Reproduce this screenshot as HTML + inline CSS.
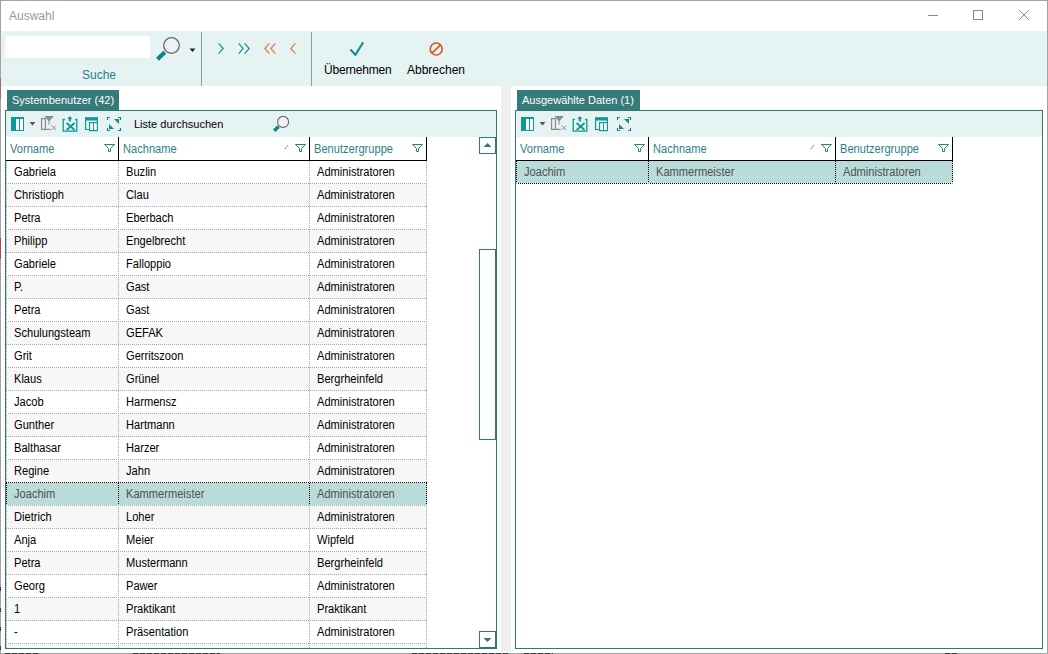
<!DOCTYPE html><html><head><meta charset="utf-8"><style>
html,body{margin:0;padding:0;}
body{width:1048px;height:654px;overflow:hidden;position:relative;background:#fff;font-family:"Liberation Sans",sans-serif;}
.t{position:absolute;white-space:nowrap;line-height:1;}
.ui{font-size:12px;}
.g{font-size:12px;transform-origin:0 0;transform:scaleX(0.925);}
</style></head><body>
<div style="position:absolute;left:0px;top:0px;width:1048px;height:654px;box-sizing:border-box;border:1px solid #a3a3a3;"></div>
<div class="t" style="left:9px;top:10px;font-size:12px;color:#9a9a9a;">Auswahl</div>
<div style="position:absolute;left:928px;top:15px;width:10px;height:1px;background:#888"></div>
<div style="position:absolute;left:973px;top:10px;width:10px;height:10px;box-sizing:border-box;border:1px solid #888"></div>
<svg style="position:absolute;left:1019px;top:10px;" width="10" height="10" viewBox="0 0 10 10"><path d="M0 0 L10 10 M10 0 L0 10" stroke="#888" stroke-width="1"/></svg>
<div style="position:absolute;left:1px;top:31px;width:1046px;height:55px;background:#e6f3f3"></div>
<div style="position:absolute;left:5px;top:36px;width:145px;height:22px;background:#fff"></div>
<svg style="position:absolute;left:154px;top:35px;" width="30" height="28" viewBox="0 0 30 28"><circle cx="17.5" cy="10.5" r="7.8" fill="#eef2f8" stroke="#6a6a6a" stroke-width="1.3"/><path d="M3.5 24.2 L10.8 17.2" stroke="#0e8584" stroke-width="4.2" stroke-linecap="butt"/></svg>
<svg style="position:absolute;left:189px;top:48px;" width="7" height="5" viewBox="0 0 7 5"><path d="M0.5 0.5 L6.5 0.5 L3.5 4 Z" fill="#222"/></svg>
<div class="t" style="left:82px;top:69px;font-size:12px;color:#2a7d8c;">Suche</div>
<div style="position:absolute;left:201px;top:32px;width:1px;height:54px;background:#8f9a9a"></div>
<div style="position:absolute;left:311px;top:32px;width:1px;height:54px;background:#8f9a9a"></div>
<svg style="position:absolute;left:218px;top:43px;" width="6" height="11" viewBox="0 0 6 11"><path d="M0.6 0.4 L5.2 5.5 L0.6 10.6" fill="none" stroke="#1b8c8c" stroke-width="1.2"/></svg>
<svg style="position:absolute;left:238px;top:43px;" width="6" height="11" viewBox="0 0 6 11"><path d="M0.6 0.4 L5.2 5.5 L0.6 10.6" fill="none" stroke="#1b8c8c" stroke-width="1.2"/></svg>
<svg style="position:absolute;left:244px;top:43px;" width="6" height="11" viewBox="0 0 6 11"><path d="M0.6 0.4 L5.2 5.5 L0.6 10.6" fill="none" stroke="#1b8c8c" stroke-width="1.2"/></svg>
<svg style="position:absolute;left:264px;top:43px;" width="6" height="11" viewBox="0 0 6 11"><path d="M5.4 0.4 L0.8 5.5 L5.4 10.6" fill="none" stroke="#e07845" stroke-width="1.2"/></svg>
<svg style="position:absolute;left:270px;top:43px;" width="6" height="11" viewBox="0 0 6 11"><path d="M5.4 0.4 L0.8 5.5 L5.4 10.6" fill="none" stroke="#e07845" stroke-width="1.2"/></svg>
<svg style="position:absolute;left:290px;top:43px;" width="6" height="11" viewBox="0 0 6 11"><path d="M5.4 0.4 L0.8 5.5 L5.4 10.6" fill="none" stroke="#e07845" stroke-width="1.2"/></svg>
<svg style="position:absolute;left:348px;top:41px;" width="17" height="16" viewBox="0 0 17 16"><path d="M2.4 8.6 L7.4 13.8 L15.2 1.4" fill="none" stroke="#1b8c8c" stroke-width="2.1"/></svg>
<svg style="position:absolute;left:428px;top:41px;" width="17" height="16" viewBox="0 0 17 16"><circle cx="8.2" cy="8" r="6" fill="none" stroke="#d9552a" stroke-width="1.7"/><path d="M12.5 3.8 L4 12.2" stroke="#d9552a" stroke-width="1.7"/></svg>
<div class="t" style="left:324px;top:64px;font-size:12px;color:#000;letter-spacing:-0.2px;">Übernehmen</div>
<div class="t" style="left:407px;top:64px;font-size:12px;color:#000;">Abbrechen</div>
<div style="position:absolute;left:501px;top:86px;width:10px;height:566px;background:#efefef"></div>
<div style="position:absolute;left:7px;top:90px;width:112px;height:20px;background:#367b79"></div>
<div class="t" style="left:12px;top:95px;font-size:11px;color:#fff;">Systembenutzer (42)</div>
<div style="position:absolute;left:5px;top:110px;width:492px;height:539px;box-sizing:border-box;border:1px solid #2f7a78;"></div>
<div style="position:absolute;left:6px;top:111px;width:490px;height:26px;background:#e6f3f3"></div>
<svg style="position:absolute;left:11px;top:117px;" width="13" height="14" viewBox="0 0 13 14"><rect x="0" y="0" width="13" height="14" fill="#0e9896"/><rect x="5" y="2" width="3" height="11" fill="#fff"/><rect x="9" y="2" width="3" height="11" fill="#fff"/></svg>
<svg style="position:absolute;left:29px;top:121px;" width="7" height="5" viewBox="0 0 7 5"><path d="M0.5 1 L6.5 1 L3.5 4.5 Z" fill="#555"/></svg>
<svg style="position:absolute;left:40px;top:115px;" width="18" height="17" viewBox="0 0 18 17"><rect x="1.6" y="3.6" width="3.8" height="10.8" fill="#f4f6f6" stroke="#8c8c8c" stroke-width="1.3"/><path d="M5 14.4 H10.5" stroke="#8c8c8c" stroke-width="1.3"/><path d="M4.5 1 H14 L9.5 6 V9.5 L8.5 10 V6 Z" fill="#8c8c8c"/><path d="M11.5 10.5 L16 15 M16 10.5 L11.5 15" stroke="#8c8c8c" stroke-width="1"/></svg>
<svg style="position:absolute;left:62px;top:115px;" width="16" height="18" viewBox="0 0 16 18"><path d="M3 4.5 H1.2 V16.2 H14.8 V4.5 H13" fill="none" stroke="#0e9896" stroke-width="1.3"/><path d="M7.8 1 L10.4 3.9 H8.8 V6.6 H6.8 V3.9 H5.2 Z" fill="#0e9896"/><path d="M4.6 8 L12.6 15 M12.6 8 L4.6 15" stroke="#0e9896" stroke-width="1.8"/></svg>
<svg style="position:absolute;left:84px;top:116px;" width="15" height="16" viewBox="0 0 15 16"><rect x="1" y="1.2" width="13" height="3.3" fill="#0e9896"/><path d="M1.6 1.2 V14 M1 13.5 H5.5 M13.4 1.2 V6.5" fill="none" stroke="#0e9896" stroke-width="1.2"/><rect x="5.6" y="6.6" width="7.8" height="8" fill="#fff" stroke="#0e9896" stroke-width="1.2"/><path d="M9.5 7 V14.6" stroke="#0e9896" stroke-width="1"/></svg>
<svg style="position:absolute;left:106px;top:116px;" width="16" height="16" viewBox="0 0 16 16"><path d="M1.5 4 V1.5 H4 M12 1.5 H14.5 V4 M14.5 12 V14.5 H12 M4 14.5 H1.5 V12" fill="none" stroke="#1a8584" stroke-width="1.2"/><path d="M8 3 H13 V8 Z" fill="#1a8584"/><path d="M3 8 V13 H8 Z" fill="#1a8584"/></svg>
<div style="position:absolute;left:6px;top:160px;width:421px;height:1px;background:#000"></div>
<div style="position:absolute;left:118px;top:137px;width:1px;height:24px;background:#000"></div>
<div class="t g" style="left:10px;top:143px;color:#2d7f88;">Vorname</div><svg style="position:absolute;left:104px;top:144px;" width="12" height="9" viewBox="0 0 12 9"><path d="M0.5 0.5 H10.5 L6.5 4.5 V7.5 H4.5 V4.5 Z" fill="none" stroke="#2f7f7f" stroke-width="1" stroke-linejoin="miter"/></svg>
<div style="position:absolute;left:309px;top:137px;width:1px;height:24px;background:#000"></div>
<div class="t g" style="left:123px;top:143px;color:#2d7f88;">Nachname</div><svg style="position:absolute;left:295px;top:144px;" width="12" height="9" viewBox="0 0 12 9"><path d="M0.5 0.5 H10.5 L6.5 4.5 V7.5 H4.5 V4.5 Z" fill="none" stroke="#2f7f7f" stroke-width="1" stroke-linejoin="miter"/></svg>
<svg style="position:absolute;left:284px;top:144px;" width="5" height="6" viewBox="0 0 5 6"><path d="M0.5 5.5 L4 1" stroke="#888" stroke-width="0.9"/></svg>
<div style="position:absolute;left:426px;top:137px;width:1px;height:24px;background:#000"></div>
<div class="t g" style="left:314px;top:143px;color:#2d7f88;">Benutzergruppe</div><svg style="position:absolute;left:412px;top:144px;" width="12" height="9" viewBox="0 0 12 9"><path d="M0.5 0.5 H10.5 L6.5 4.5 V7.5 H4.5 V4.5 Z" fill="none" stroke="#2f7f7f" stroke-width="1" stroke-linejoin="miter"/></svg>
<div style="position:absolute;left:6px;top:183px;width:421px;height:1px;background:repeating-linear-gradient(to right,#a8a8a8 0 1px,transparent 1px 2px)"></div>
<div class="t g" style="left:14px;top:166px;color:#000;">Gabriela</div><div class="t g" style="left:126px;top:166px;color:#000;">Buzlin</div><div class="t g" style="left:317px;top:166px;color:#000;">Administratoren</div><div style="position:absolute;left:6px;top:184px;width:421px;height:23px;background:#f7f7f7"></div>
<div style="position:absolute;left:6px;top:206px;width:421px;height:1px;background:repeating-linear-gradient(to right,#a8a8a8 0 1px,transparent 1px 2px)"></div>
<div class="t g" style="left:14px;top:189px;color:#000;">Christioph</div><div class="t g" style="left:126px;top:189px;color:#000;">Clau</div><div class="t g" style="left:317px;top:189px;color:#000;">Administratoren</div><div style="position:absolute;left:6px;top:229px;width:421px;height:1px;background:repeating-linear-gradient(to right,#a8a8a8 0 1px,transparent 1px 2px)"></div>
<div class="t g" style="left:14px;top:212px;color:#000;">Petra</div><div class="t g" style="left:126px;top:212px;color:#000;">Eberbach</div><div class="t g" style="left:317px;top:212px;color:#000;">Administratoren</div><div style="position:absolute;left:6px;top:230px;width:421px;height:23px;background:#f7f7f7"></div>
<div style="position:absolute;left:6px;top:252px;width:421px;height:1px;background:repeating-linear-gradient(to right,#a8a8a8 0 1px,transparent 1px 2px)"></div>
<div class="t g" style="left:14px;top:235px;color:#000;">Philipp</div><div class="t g" style="left:126px;top:235px;color:#000;">Engelbrecht</div><div class="t g" style="left:317px;top:235px;color:#000;">Administratoren</div><div style="position:absolute;left:6px;top:275px;width:421px;height:1px;background:repeating-linear-gradient(to right,#a8a8a8 0 1px,transparent 1px 2px)"></div>
<div class="t g" style="left:14px;top:258px;color:#000;">Gabriele</div><div class="t g" style="left:126px;top:258px;color:#000;">Falloppio</div><div class="t g" style="left:317px;top:258px;color:#000;">Administratoren</div><div style="position:absolute;left:6px;top:276px;width:421px;height:23px;background:#f7f7f7"></div>
<div style="position:absolute;left:6px;top:298px;width:421px;height:1px;background:repeating-linear-gradient(to right,#a8a8a8 0 1px,transparent 1px 2px)"></div>
<div class="t g" style="left:14px;top:281px;color:#000;">P.</div><div class="t g" style="left:126px;top:281px;color:#000;">Gast</div><div class="t g" style="left:317px;top:281px;color:#000;">Administratoren</div><div style="position:absolute;left:6px;top:321px;width:421px;height:1px;background:repeating-linear-gradient(to right,#a8a8a8 0 1px,transparent 1px 2px)"></div>
<div class="t g" style="left:14px;top:304px;color:#000;">Petra</div><div class="t g" style="left:126px;top:304px;color:#000;">Gast</div><div class="t g" style="left:317px;top:304px;color:#000;">Administratoren</div><div style="position:absolute;left:6px;top:322px;width:421px;height:23px;background:#f7f7f7"></div>
<div style="position:absolute;left:6px;top:344px;width:421px;height:1px;background:repeating-linear-gradient(to right,#a8a8a8 0 1px,transparent 1px 2px)"></div>
<div class="t g" style="left:14px;top:327px;color:#000;">Schulungsteam</div><div class="t g" style="left:126px;top:327px;color:#000;">GEFAK</div><div class="t g" style="left:317px;top:327px;color:#000;">Administratoren</div><div style="position:absolute;left:6px;top:367px;width:421px;height:1px;background:repeating-linear-gradient(to right,#a8a8a8 0 1px,transparent 1px 2px)"></div>
<div class="t g" style="left:14px;top:350px;color:#000;">Grit</div><div class="t g" style="left:126px;top:350px;color:#000;">Gerritszoon</div><div class="t g" style="left:317px;top:350px;color:#000;">Administratoren</div><div style="position:absolute;left:6px;top:368px;width:421px;height:23px;background:#f7f7f7"></div>
<div style="position:absolute;left:6px;top:390px;width:421px;height:1px;background:repeating-linear-gradient(to right,#a8a8a8 0 1px,transparent 1px 2px)"></div>
<div class="t g" style="left:14px;top:373px;color:#000;">Klaus</div><div class="t g" style="left:126px;top:373px;color:#000;">Grünel</div><div class="t g" style="left:317px;top:373px;color:#000;">Bergrheinfeld</div><div style="position:absolute;left:6px;top:413px;width:421px;height:1px;background:repeating-linear-gradient(to right,#a8a8a8 0 1px,transparent 1px 2px)"></div>
<div class="t g" style="left:14px;top:396px;color:#000;">Jacob</div><div class="t g" style="left:126px;top:396px;color:#000;">Harmensz</div><div class="t g" style="left:317px;top:396px;color:#000;">Administratoren</div><div style="position:absolute;left:6px;top:414px;width:421px;height:23px;background:#f7f7f7"></div>
<div style="position:absolute;left:6px;top:436px;width:421px;height:1px;background:repeating-linear-gradient(to right,#a8a8a8 0 1px,transparent 1px 2px)"></div>
<div class="t g" style="left:14px;top:419px;color:#000;">Gunther</div><div class="t g" style="left:126px;top:419px;color:#000;">Hartmann</div><div class="t g" style="left:317px;top:419px;color:#000;">Administratoren</div><div style="position:absolute;left:6px;top:459px;width:421px;height:1px;background:repeating-linear-gradient(to right,#a8a8a8 0 1px,transparent 1px 2px)"></div>
<div class="t g" style="left:14px;top:442px;color:#000;">Balthasar</div><div class="t g" style="left:126px;top:442px;color:#000;">Harzer</div><div class="t g" style="left:317px;top:442px;color:#000;">Administratoren</div><div style="position:absolute;left:6px;top:460px;width:421px;height:23px;background:#f7f7f7"></div>
<div style="position:absolute;left:6px;top:482px;width:421px;height:1px;background:repeating-linear-gradient(to right,#000 0 1px,transparent 1px 2px)"></div>
<div class="t g" style="left:14px;top:465px;color:#000;">Regine</div><div class="t g" style="left:126px;top:465px;color:#000;">Jahn</div><div class="t g" style="left:317px;top:465px;color:#000;">Administratoren</div><div style="position:absolute;left:6px;top:483px;width:421px;height:22px;background:#b9dcdb"></div>
<div style="position:absolute;left:6px;top:505px;width:421px;height:1px;background:repeating-linear-gradient(to right,#a8a8a8 0 1px,transparent 1px 2px)"></div>
<div class="t g" style="left:14px;top:488px;color:#505050;">Joachim</div><div class="t g" style="left:126px;top:488px;color:#505050;">Kammermeister</div><div class="t g" style="left:317px;top:488px;color:#505050;">Administratoren</div><div style="position:absolute;left:6px;top:506px;width:421px;height:23px;background:#f7f7f7"></div>
<div style="position:absolute;left:6px;top:528px;width:421px;height:1px;background:repeating-linear-gradient(to right,#a8a8a8 0 1px,transparent 1px 2px)"></div>
<div class="t g" style="left:14px;top:511px;color:#000;">Dietrich</div><div class="t g" style="left:126px;top:511px;color:#000;">Loher</div><div class="t g" style="left:317px;top:511px;color:#000;">Administratoren</div><div style="position:absolute;left:6px;top:551px;width:421px;height:1px;background:repeating-linear-gradient(to right,#a8a8a8 0 1px,transparent 1px 2px)"></div>
<div class="t g" style="left:14px;top:534px;color:#000;">Anja</div><div class="t g" style="left:126px;top:534px;color:#000;">Meier</div><div class="t g" style="left:317px;top:534px;color:#000;">Wipfeld</div><div style="position:absolute;left:6px;top:552px;width:421px;height:23px;background:#f7f7f7"></div>
<div style="position:absolute;left:6px;top:574px;width:421px;height:1px;background:repeating-linear-gradient(to right,#a8a8a8 0 1px,transparent 1px 2px)"></div>
<div class="t g" style="left:14px;top:557px;color:#000;">Petra</div><div class="t g" style="left:126px;top:557px;color:#000;">Mustermann</div><div class="t g" style="left:317px;top:557px;color:#000;">Bergrheinfeld</div><div style="position:absolute;left:6px;top:597px;width:421px;height:1px;background:repeating-linear-gradient(to right,#a8a8a8 0 1px,transparent 1px 2px)"></div>
<div class="t g" style="left:14px;top:580px;color:#000;">Georg</div><div class="t g" style="left:126px;top:580px;color:#000;">Pawer</div><div class="t g" style="left:317px;top:580px;color:#000;">Administratoren</div><div style="position:absolute;left:6px;top:598px;width:421px;height:23px;background:#f7f7f7"></div>
<div style="position:absolute;left:6px;top:620px;width:421px;height:1px;background:repeating-linear-gradient(to right,#a8a8a8 0 1px,transparent 1px 2px)"></div>
<div class="t g" style="left:14px;top:603px;color:#000;">1</div><div class="t g" style="left:126px;top:603px;color:#000;">Praktikant</div><div class="t g" style="left:317px;top:603px;color:#000;">Praktikant</div><div style="position:absolute;left:6px;top:643px;width:421px;height:1px;background:repeating-linear-gradient(to right,#a8a8a8 0 1px,transparent 1px 2px)"></div>
<div class="t g" style="left:14px;top:626px;color:#000;">-</div><div class="t g" style="left:126px;top:626px;color:#000;">Präsentation</div><div class="t g" style="left:317px;top:626px;color:#000;">Administratoren</div><div style="position:absolute;left:6px;top:644px;width:421px;height:4px;background:#f7f7f7"></div>
<div style="position:absolute;left:6px;top:161px;width:1px;height:487px;background:repeating-linear-gradient(to bottom,#a8a8a8 0 1px,transparent 1px 2px)"></div>
<div style="position:absolute;left:118px;top:161px;width:1px;height:487px;background:repeating-linear-gradient(to bottom,#a8a8a8 0 1px,transparent 1px 2px)"></div>
<div style="position:absolute;left:309px;top:161px;width:1px;height:487px;background:repeating-linear-gradient(to bottom,#a8a8a8 0 1px,transparent 1px 2px)"></div>
<div style="position:absolute;left:426px;top:161px;width:1px;height:487px;background:repeating-linear-gradient(to bottom,#a8a8a8 0 1px,transparent 1px 2px)"></div>
<div style="position:absolute;left:6px;top:483px;width:1px;height:22px;background:repeating-linear-gradient(to bottom,#000 0 1px,transparent 1px 2px)"></div>
<div style="position:absolute;left:118px;top:483px;width:1px;height:22px;background:repeating-linear-gradient(to bottom,#000 0 1px,transparent 1px 2px)"></div>
<div style="position:absolute;left:309px;top:483px;width:1px;height:22px;background:repeating-linear-gradient(to bottom,#000 0 1px,transparent 1px 2px)"></div>
<div style="position:absolute;left:426px;top:483px;width:1px;height:22px;background:repeating-linear-gradient(to bottom,#000 0 1px,transparent 1px 2px)"></div>
<div style="position:absolute;left:479px;top:137px;width:17px;height:17px;box-sizing:border-box;border:1px solid #2f7a78;background:#fff"></div>
<svg style="position:absolute;left:483px;top:142px;" width="9" height="6" viewBox="0 0 9 6"><path d="M4.5 1 L8.5 5 H0.5 Z" fill="#2f7a78"/></svg>
<div style="position:absolute;left:479px;top:249px;width:17px;height:191px;box-sizing:border-box;border:1px solid #2f7a78;background:#fff"></div>
<div style="position:absolute;left:479px;top:631px;width:17px;height:17px;box-sizing:border-box;border:1px solid #2f7a78;background:#fff"></div>
<svg style="position:absolute;left:483px;top:637px;" width="9" height="6" viewBox="0 0 9 6"><path d="M4.5 5 L8.5 1 H0.5 Z" fill="#2f7a78"/></svg>
<div class="t" style="left:134px;top:119px;font-size:11px;color:#000;">Liste durchsuchen</div>
<svg style="position:absolute;left:270px;top:113px;" width="22" height="22" viewBox="0 0 22 22"><circle cx="13.1" cy="8.9" r="5.5" fill="#eef2f8" stroke="#6a6a6a" stroke-width="1.1"/><path d="M4.2 17.8 L8.6 13.6" stroke="#0e8584" stroke-width="3.4" stroke-linecap="butt"/></svg>
<div style="position:absolute;left:517px;top:90px;width:123px;height:20px;background:#367b79"></div>
<div class="t" style="left:522px;top:95px;font-size:11px;color:#fff;">Ausgewählte Daten (1)</div>
<div style="position:absolute;left:515px;top:110px;width:528px;height:539px;box-sizing:border-box;border:1px solid #2f7a78;"></div>
<div style="position:absolute;left:516px;top:111px;width:526px;height:26px;background:#e6f3f3"></div>
<svg style="position:absolute;left:521px;top:117px;" width="13" height="14" viewBox="0 0 13 14"><rect x="0" y="0" width="13" height="14" fill="#0e9896"/><rect x="5" y="2" width="3" height="11" fill="#fff"/><rect x="9" y="2" width="3" height="11" fill="#fff"/></svg>
<svg style="position:absolute;left:539px;top:121px;" width="7" height="5" viewBox="0 0 7 5"><path d="M0.5 1 L6.5 1 L3.5 4.5 Z" fill="#555"/></svg>
<svg style="position:absolute;left:550px;top:115px;" width="18" height="17" viewBox="0 0 18 17"><rect x="1.6" y="3.6" width="3.8" height="10.8" fill="#f4f6f6" stroke="#8c8c8c" stroke-width="1.3"/><path d="M5 14.4 H10.5" stroke="#8c8c8c" stroke-width="1.3"/><path d="M4.5 1 H14 L9.5 6 V9.5 L8.5 10 V6 Z" fill="#8c8c8c"/><path d="M11.5 10.5 L16 15 M16 10.5 L11.5 15" stroke="#8c8c8c" stroke-width="1"/></svg>
<svg style="position:absolute;left:572px;top:115px;" width="16" height="18" viewBox="0 0 16 18"><path d="M3 4.5 H1.2 V16.2 H14.8 V4.5 H13" fill="none" stroke="#0e9896" stroke-width="1.3"/><path d="M7.8 1 L10.4 3.9 H8.8 V6.6 H6.8 V3.9 H5.2 Z" fill="#0e9896"/><path d="M4.6 8 L12.6 15 M12.6 8 L4.6 15" stroke="#0e9896" stroke-width="1.8"/></svg>
<svg style="position:absolute;left:594px;top:116px;" width="15" height="16" viewBox="0 0 15 16"><rect x="1" y="1.2" width="13" height="3.3" fill="#0e9896"/><path d="M1.6 1.2 V14 M1 13.5 H5.5 M13.4 1.2 V6.5" fill="none" stroke="#0e9896" stroke-width="1.2"/><rect x="5.6" y="6.6" width="7.8" height="8" fill="#fff" stroke="#0e9896" stroke-width="1.2"/><path d="M9.5 7 V14.6" stroke="#0e9896" stroke-width="1"/></svg>
<svg style="position:absolute;left:616px;top:116px;" width="16" height="16" viewBox="0 0 16 16"><path d="M1.5 4 V1.5 H4 M12 1.5 H14.5 V4 M14.5 12 V14.5 H12 M4 14.5 H1.5 V12" fill="none" stroke="#1a8584" stroke-width="1.2"/><path d="M8 3 H13 V8 Z" fill="#1a8584"/><path d="M3 8 V13 H8 Z" fill="#1a8584"/></svg>
<div style="position:absolute;left:516px;top:160px;width:437px;height:1px;background:#000"></div>
<div style="position:absolute;left:648px;top:137px;width:1px;height:24px;background:#000"></div>
<div class="t g" style="left:520px;top:143px;color:#2d7f88;">Vorname</div><svg style="position:absolute;left:634px;top:144px;" width="12" height="9" viewBox="0 0 12 9"><path d="M0.5 0.5 H10.5 L6.5 4.5 V7.5 H4.5 V4.5 Z" fill="none" stroke="#2f7f7f" stroke-width="1" stroke-linejoin="miter"/></svg>
<div style="position:absolute;left:835px;top:137px;width:1px;height:24px;background:#000"></div>
<div class="t g" style="left:653px;top:143px;color:#2d7f88;">Nachname</div><svg style="position:absolute;left:821px;top:144px;" width="12" height="9" viewBox="0 0 12 9"><path d="M0.5 0.5 H10.5 L6.5 4.5 V7.5 H4.5 V4.5 Z" fill="none" stroke="#2f7f7f" stroke-width="1" stroke-linejoin="miter"/></svg>
<svg style="position:absolute;left:810px;top:144px;" width="5" height="6" viewBox="0 0 5 6"><path d="M0.5 5.5 L4 1" stroke="#888" stroke-width="0.9"/></svg>
<div style="position:absolute;left:952px;top:137px;width:1px;height:24px;background:#000"></div>
<div class="t g" style="left:840px;top:143px;color:#2d7f88;">Benutzergruppe</div><svg style="position:absolute;left:938px;top:144px;" width="12" height="9" viewBox="0 0 12 9"><path d="M0.5 0.5 H10.5 L6.5 4.5 V7.5 H4.5 V4.5 Z" fill="none" stroke="#2f7f7f" stroke-width="1" stroke-linejoin="miter"/></svg>
<div style="position:absolute;left:516px;top:161px;width:437px;height:22px;background:#b9dcdb"></div>
<div style="position:absolute;left:516px;top:183px;width:437px;height:1px;background:repeating-linear-gradient(to right,#000 0 1px,transparent 1px 2px)"></div>
<div class="t g" style="left:524px;top:166px;color:#505050;">Joachim</div><div class="t g" style="left:656px;top:166px;color:#505050;">Kammermeister</div><div class="t g" style="left:843px;top:166px;color:#505050;">Administratoren</div><div style="position:absolute;left:516px;top:161px;width:1px;height:23px;background:repeating-linear-gradient(to bottom,#a8a8a8 0 1px,transparent 1px 2px)"></div>
<div style="position:absolute;left:648px;top:161px;width:1px;height:23px;background:repeating-linear-gradient(to bottom,#a8a8a8 0 1px,transparent 1px 2px)"></div>
<div style="position:absolute;left:835px;top:161px;width:1px;height:23px;background:repeating-linear-gradient(to bottom,#a8a8a8 0 1px,transparent 1px 2px)"></div>
<div style="position:absolute;left:952px;top:161px;width:1px;height:23px;background:repeating-linear-gradient(to bottom,#a8a8a8 0 1px,transparent 1px 2px)"></div>
<div style="position:absolute;left:516px;top:161px;width:1px;height:22px;background:repeating-linear-gradient(to bottom,#000 0 1px,transparent 1px 2px)"></div>
<div style="position:absolute;left:648px;top:161px;width:1px;height:22px;background:repeating-linear-gradient(to bottom,#000 0 1px,transparent 1px 2px)"></div>
<div style="position:absolute;left:835px;top:161px;width:1px;height:22px;background:repeating-linear-gradient(to bottom,#000 0 1px,transparent 1px 2px)"></div>
<div style="position:absolute;left:952px;top:161px;width:1px;height:22px;background:repeating-linear-gradient(to bottom,#000 0 1px,transparent 1px 2px)"></div>
<div style="position:absolute;left:5px;top:653px;width:35px;height:1px;background:repeating-linear-gradient(to right,#3a3a3a 0 5px,#8a8a8a 5px 7px)"></div>
<div style="position:absolute;left:133px;top:653px;width:87px;height:1px;background:repeating-linear-gradient(to right,#3a3a3a 0 5px,#8a8a8a 5px 7px)"></div>
<div style="position:absolute;left:412px;top:653px;width:98px;height:1px;background:repeating-linear-gradient(to right,#3a3a3a 0 5px,#8a8a8a 5px 7px)"></div>
<div style="position:absolute;left:524px;top:653px;width:29px;height:1px;background:repeating-linear-gradient(to right,#3a3a3a 0 5px,#8a8a8a 5px 7px)"></div>
<div style="position:absolute;left:945px;top:653px;width:12px;height:1px;background:repeating-linear-gradient(to right,#3a3a3a 0 5px,#8a8a8a 5px 7px)"></div>
<div style="position:absolute;left:0px;top:78px;width:1px;height:21px;background:#a07060"></div>
<div style="position:absolute;left:0px;top:238px;width:1px;height:21px;background:#b04848"></div>
<div style="position:absolute;left:0px;top:587px;width:1px;height:4px;background:#503060"></div>
<div style="position:absolute;left:0px;top:608px;width:1px;height:4px;background:#503060"></div>
<div style="position:absolute;left:0px;top:627px;width:1px;height:4px;background:#503060"></div>
<div style="position:absolute;left:0px;top:646px;width:1px;height:4px;background:#503060"></div>
</body></html>
